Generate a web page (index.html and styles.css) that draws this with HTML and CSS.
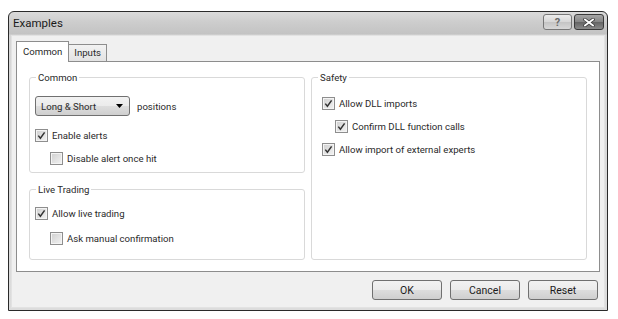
FILE: index.html
```html
<!DOCTYPE html>
<html lang="en">
  <head>
    <meta name="viewport" content="width=device-width, initial-scale=1.0">
    <link rel="stylesheet" href="styles.css">
  </head>
  <body>
    <div class="window">
      <div class="titlebar">
        <span class="title">Examples</span>
        <div class="captionButtons">
          <span class="capBtn helpBtn">?</span>
          <span class="capBtn closeBtn">
            <svg width="12" height="9" viewBox="0 0 12 9"><path d="M2 1.5 L10 7.5 M10 1.5 L2 7.5" stroke="#3c3c3c" stroke-width="3.4" stroke-linecap="square"/><path d="M2 1.5 L10 7.5 M10 1.5 L2 7.5" stroke="#fff" stroke-width="1.8" stroke-linecap="square"/></svg>
          </span>
        </div>
      </div>
      <div class="client">
        <div class="tabs">
          <span class="tab active">Common</span>
          <span class="tab">Inputs</span>
        </div>
        <div class="panel">
          <div class="column">
            <div class="group commonGroup">
              <span class="legend">Common</span>
              <div class="comboRow">
                <div class="combo">
                  <span>Long &amp; Short</span>
                  <svg width="7" height="4" viewBox="0 0 7 4"><path d="M0 0 H7 L3.5 4 Z" fill="#000"/></svg>
                </div>
                <span>positions</span>
              </div>
              <div class="row"><span class="check"><svg class="tick" width="11" height="11" viewBox="0 0 11 11"><path d="M2.3 5.6 L4.4 8.2 L8.6 2.4" fill="none" stroke="#333" stroke-width="1.5"/></svg></span>Enable alerts</div>
              <div class="row indent"><span class="check"></span>Disable alert once hit</div>
            </div>
            <div class="group liveGroup">
              <span class="legend">Live Trading</span>
              <div class="row"><span class="check"><svg class="tick" width="11" height="11" viewBox="0 0 11 11"><path d="M2.3 5.6 L4.4 8.2 L8.6 2.4" fill="none" stroke="#333" stroke-width="1.5"/></svg></span>Allow live trading</div>
              <div class="row indent"><span class="check"></span>Ask manual confirmation</div>
            </div>
          </div>
          <div class="column">
            <div class="group safetyGroup">
              <span class="legend">Safety</span>
              <div class="row"><span class="check"><svg class="tick" width="11" height="11" viewBox="0 0 11 11"><path d="M2.3 5.6 L4.4 8.2 L8.6 2.4" fill="none" stroke="#333" stroke-width="1.5"/></svg></span>Allow DLL imports</div>
              <div class="row indentSmall"><span class="check"><svg class="tick" width="11" height="11" viewBox="0 0 11 11"><path d="M2.3 5.6 L4.4 8.2 L8.6 2.4" fill="none" stroke="#333" stroke-width="1.5"/></svg></span>Confirm DLL function calls</div>
              <div class="row"><span class="check"><svg class="tick" width="11" height="11" viewBox="0 0 11 11"><path d="M2.3 5.6 L4.4 8.2 L8.6 2.4" fill="none" stroke="#333" stroke-width="1.5"/></svg></span>Allow import of external experts</div>
            </div>
          </div>
        </div>
        <div class="actions">
          <button class="btn">OK</button>
          <button class="btn">Cancel</button>
          <button class="btn">Reset</button>
        </div>
      </div>
    </div>
  </body>
</html>
```

FILE: styles.css
```css
body{
  margin: 0;
  background: #fff;
  font-family: Roboto, "Liberation Sans", sans-serif;
  font-size: 9.6px;
  color: #2a2a2a;
}
.window{
  margin: 11px 0 0 8px;
  width: 600px;
  height: 300px;
  box-sizing: border-box;
  border: 1px solid #2a2a2a;
  border-radius: 6px 6px 0 0;
  background: linear-gradient(#dadada 0, #cdcdcd 10px, #c3c3c3 22px, #d6d6d6 23px, #dcdcdc 100%);
  display: flex;
  flex-direction: column;
}
.titlebar{
  height: 23px;
  display: flex;
  justify-content: space-between;
  align-items: flex-start;
  padding: 0 3px 0 4px;
}
.title{
  font-size: 11.5px;
  line-height: 23px;
  color: #1a1a1a;
}
.captionButtons{
  display: flex;
  gap: 2px;
  margin-top: 2px;
}
.capBtn{
  height: 16px;
  box-sizing: border-box;
  border-radius: 3px;
  display: flex;
  align-items: center;
  justify-content: center;
}
.helpBtn{
  width: 29px;
  border: 1px solid #777;
  background: linear-gradient(#ececec 0, #d6d6d6 50%, #c4c4c4 51%, #d8d8d8 100%);
  color: #6a6a6a;
  font-weight: bold;
  font-size: 11px;
}
.closeBtn{
  width: 30px;
  border: 1px solid #3a3a3a;
  background: linear-gradient(#a6a6a6 0, #858585 50%, #646464 51%, #8a8a8a 100%);
}
.client{
  flex: 1;
  margin: 0 2px 2px 2px;
  border: 1px solid #e2e2e2;
  background: #f0f0f0;
  padding: 5px 6px 7px 4px;
  display: flex;
  flex-direction: column;
}
.tabs{
  display: flex;
  align-items: flex-end;
  height: 20px;
  margin-right: -2px;
}
.tab{
  height: 17px;
  line-height: 16px;
  box-sizing: border-box;
  padding: 0 5px;
  border: 1px solid #8d8d8d;
  border-bottom: none;
  background: linear-gradient(#f2f2f2, #e3e3e3);
}
.tab.active{
  height: 21px;
  line-height: 19px;
  margin-bottom: -1px;
  padding: 0 6px;
  background: #fff;
  position: relative;
  z-index: 1;
}
.tab + .tab{
  border-left: none;
}
.panel{
  height: 211px;
  box-sizing: border-box;
  margin-right: -2px;
  border: 1px solid #8d8d8d;
  background: #fff;
  padding: 15px 12px 11px 12px;
  display: grid;
  grid-template-columns: 276px 276px;
  column-gap: 6px;
}
.column{
  display: flex;
  flex-direction: column;
}
.group{
  position: relative;
  border: 1px solid #d9d9d9;
  border-radius: 3px;
  display: flex;
  flex-direction: column;
}
.legend{
  position: absolute;
  top: -7px;
  left: 6px;
  padding: 0 2px;
  line-height: 13px;
  background: #fff;
}
.commonGroup{
  padding: 18px 5px 6px 5px;
  gap: 7px;
}
.liveGroup{
  flex: 1;
  margin-top: 16px;
  padding: 15px 5px 0 5px;
  gap: 9px;
}
.safetyGroup{
  flex: 1;
  padding: 17px 10px 0 10px;
  gap: 7px;
}
.comboRow{
  display: flex;
  align-items: center;
  gap: 7px;
  margin-bottom: 4px;
}
.combo{
  width: 95px;
  height: 20px;
  box-sizing: border-box;
  border: 1px solid #707070;
  border-radius: 3px;
  background: linear-gradient(#f2f2f2 0, #ebebeb 50%, #dddddd 51%, #cfcfcf 100%);
  display: flex;
  align-items: center;
  justify-content: space-between;
  padding: 0 6px 0 5px;
}
.row{
  display: flex;
  align-items: center;
  gap: 4px;
  height: 16px;
}
.indent{
  margin-left: 15px;
}
.indentSmall{
  margin-left: 13px;
}
.check{
  width: 13px;
  height: 13px;
  box-sizing: border-box;
  border: 1px solid #8e8e8e;
  box-shadow: inset 0 0 0 1px #f4f4f4;
  background: linear-gradient(135deg, #cfcfcf, #f3f3f3);
  flex: none;
}
.tick{
  display: block;
}
.actions{
  display: flex;
  justify-content: flex-end;
  gap: 8px;
  margin-top: 8px;
}
.btn{
  width: 70px;
  height: 20px;
  box-sizing: border-box;
  border: 1px solid #707070;
  border-radius: 3px;
  background: linear-gradient(#f2f2f2 0, #ebebeb 50%, #dddddd 51%, #cfcfcf 100%);
  font-family: inherit;
  font-size: 10.5px;
  color: #1c1c1c;
  padding: 0;
}
```
